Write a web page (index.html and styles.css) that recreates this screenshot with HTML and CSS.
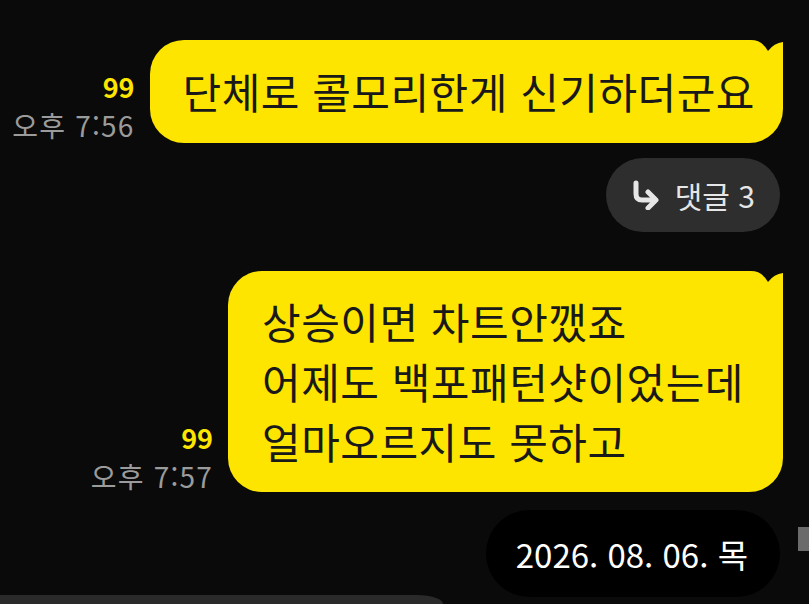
FILE: index.html
```html
<!DOCTYPE html>
<html lang="ko">
<head>
   <meta charset="UTF-8">
   <meta name="viewport" content="width=device-width, initial-scale=1.0">
   <title>채팅</title>
   <link rel="stylesheet" href="styles.css">
</head>
<body class="chat">
   <main class="log">

      <div class="msg">
         <div class="meta">
            <span class="unread">99</span>
            <span class="time">오후 7:56</span>
         </div>
         <div class="bubble">
            <p class="text">단체로 콜모리한게 신기하더군요</p>
            <svg class="tail" viewBox="0 0 32 14" aria-hidden="true"><path d="M0 0 Q11 0 17 11 Q23 3 32 2 V0 Z"/></svg>
         </div>
      </div>

      <div class="reply-row">
         <button class="reply">
            <svg class="reply-icon" viewBox="0 0 28 30" aria-hidden="true"><path d="M5 3 V14 Q5 20 11 20 H23"/><path d="M17 12 L25 20 L17 28"/></svg>
            <span>댓글 3</span>
         </button>
      </div>

      <div class="msg msg-gap">
         <div class="meta meta-low">
            <span class="unread">99</span>
            <span class="time">오후 7:57</span>
         </div>
         <div class="bubble bubble-multi">
            <p class="text">상승이면 차트안깼죠<br>어제도 백포패턴샷이었는데<br>얼마오르지도 못하고</p>
            <svg class="tail" viewBox="0 0 32 14" aria-hidden="true"><path d="M0 0 Q11 0 17 11 Q23 3 32 2 V0 Z"/></svg>
         </div>
      </div>

      <div class="date-row">
         <span class="date">2026. 08. 06. 목</span>
      </div>

   </main>

   <!-- scroll thumb and the top of the next bubble, both cut by the window -->
   <div class="scroll-thumb"></div>
   <div class="next-bubble"></div>
</body>
</html>
```

FILE: styles.css
```css
:root {
   --bg: #0a0a0a;
   --yellow: #fee500;
   --ink: #191919;
   --muted: #9b9b9b;
   --pill: #2e2e2e;
   --font: "Noto Sans CJK KR", "Noto Sans", sans-serif;
}

* { box-sizing: border-box; }

.chat { margin: 0; background-color: var(--bg); font-family: var(--font); height: 604px; overflow: hidden; position: relative; }

.log { display: flex; flex-direction: column; padding: 40px 26px 0 0; height: 604px; }

.msg { display: flex; justify-content: flex-end; align-items: flex-end; flex-shrink: 0; }
.msg-gap { margin-top: 39px; }

.meta { display: flex; flex-direction: column; align-items: flex-end; margin-right: 15px; padding-bottom: 2px; }
.meta-low { padding-bottom: 0; }
.unread { color: var(--yellow); font-size: 27px; font-weight: 700; line-height: 30px; margin-bottom: 7px; }
.time { color: var(--muted); font-size: 28px; line-height: 32px; letter-spacing: 1.2px; }

.bubble { position: relative; background-color: var(--yellow); border-radius: 34px 0 34px 34px; padding: 21px 28px 22px 33px; }
.bubble-multi { padding: 20px 39px 21px 34px; }
.text { margin: 0; color: var(--ink); font-size: 42px; line-height: 60px; letter-spacing: 0.5px; white-space: nowrap; }
.tail { position: absolute; top: 0; right: 0; width: 32px; height: 14px; fill: var(--bg); }

.reply-row { display: flex; justify-content: flex-end; margin-top: 15px; padding-right: 3px; flex-shrink: 0; }
.reply { display: flex; align-items: center; gap: 16px; height: 74px; padding: 0 25px 0 25px; border: none; border-radius: 37px; background-color: var(--pill); color: #e6e6e6; font-family: var(--font); font-size: 30px; }
.reply-icon { width: 28px; height: 30px; fill: none; stroke: #e6e6e6; stroke-width: 5; stroke-linecap: round; stroke-linejoin: round; }

.date-row { display: flex; justify-content: flex-end; margin-top: 18px; padding-right: 3px; flex-shrink: 0; }
.date { display: flex; align-items: center; height: 87px; padding: 0 32px 0 30px; border-radius: 44px; background-color: #000; color: #fff; font-size: 33px; }

.scroll-thumb { position: absolute; top: 527px; right: 0; width: 11px; height: 24px; background-color: #6b6b6b; }
.next-bubble { position: absolute; top: 595px; left: 0; width: 443px; height: 9px; background-color: #2a2a2a; border-top-right-radius: 26px 9px; }
```
